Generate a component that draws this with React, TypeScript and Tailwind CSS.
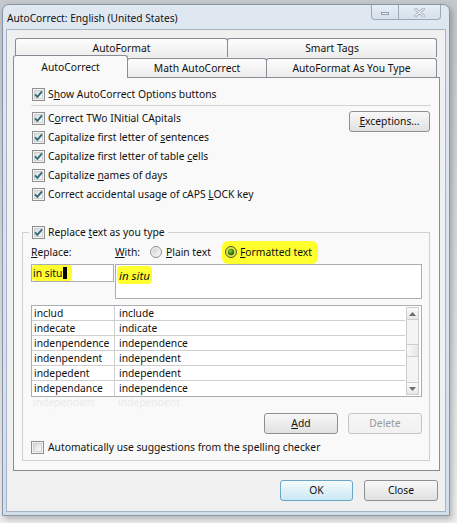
import React from 'react';

function CheckBox({ checked = true }: { checked?: boolean }) {
  return (
    <svg width="13" height="13" viewBox="0 0 13 13" className="shrink-0">
      <defs>
        <linearGradient id="cbfill" x1="0" y1="0" x2="1" y2="1">
          <stop offset="0" stopColor="#d9d9d9" />
          <stop offset="1" stopColor="#fbfbfb" />
        </linearGradient>
      </defs>
      <rect x="0.5" y="0.5" width="12" height="12" fill="#f4f4f4" stroke="#8e8f8f" />
      <rect x="2.5" y="2.5" width="8" height="8" fill="url(#cbfill)" stroke="#cfcfcf" />
      {checked && (
        <path d="M3 6.3 L5.4 8.8 L10 3.4" fill="none" stroke="#2b6c7e" strokeWidth="1.9" />
      )}
    </svg>
  );
}

function Radio({ checked = false }: { checked?: boolean }) {
  return (
    <svg width="12" height="12" viewBox="0 0 12 12" className="shrink-0">
      <defs>
        <linearGradient id="rdfill" x1="0" y1="0" x2="1" y2="1">
          <stop offset="0" stopColor="#cfcfcf" />
          <stop offset="1" stopColor="#f7f7f7" />
        </linearGradient>
        <radialGradient id="rddot" cx="0.4" cy="0.35" r="0.7">
          <stop offset="0" stopColor="#7fd23a" />
          <stop offset="1" stopColor="#1c4d0c" />
        </radialGradient>
      </defs>
      <circle cx="6" cy="6" r="5.5" fill={checked ? '#e6e64a' : '#f2f2f2'} stroke={checked ? '#55581a' : '#8e8f8f'} />
      {checked ? (
        <circle cx="6" cy="6" r="3.2" fill="url(#rddot)" />
      ) : (
        <circle cx="6" cy="6" r="3.8" fill="url(#rdfill)" />
      )}
    </svg>
  );
}

function CheckRow({ children, checked = true }: { children: React.ReactNode; checked?: boolean }) {
  return (
    <div className="flex h-[19px] items-center gap-[3px] pl-[18px]">
      <CheckBox checked={checked} />
      <span className="whitespace-nowrap">{children}</span>
    </div>
  );
}

function Btn({ children, w, kind = 'normal' }: { children: React.ReactNode; w: string; kind?: 'normal' | 'default' | 'disabled' }) {
  const look =
    kind === 'default'
      ? 'border-[#6aa6c6] from-[#f6fbfd] to-[#c9e8f4]'
      : kind === 'disabled'
        ? 'border-[#c4c6c8] from-[#f6f6f6] to-[#f1f1f1] text-[#9a9a9a]'
        : 'border-[#8e8f8f] from-[#f8f8f8] to-[#e1e1e1]';
  return (
    <div className={`flex h-[21px] ${w} items-center justify-center rounded-[3px] border bg-gradient-to-b ${look}`}>
      {children}
    </div>
  );
}

const rows = [
  ['includ', 'include'],
  ['indecate', 'indicate'],
  ['indenpendence', 'independence'],
  ['indenpendent', 'independent'],
  ['indepedent', 'independent'],
  ['independance', 'independence'],
];

export default function App() {
  return (
    <div className="h-[523px] w-[457px] overflow-hidden bg-gradient-to-b from-[#c4c7cb] to-[#eeeeee] font-['Noto_Sans',sans-serif] text-[10.3px] leading-[15px] text-[#111]">
      <div className="ml-[2px] mt-[4px] flex h-[512px] w-[448px] flex-col rounded-t-[7px] border border-[#8797a9] bg-gradient-to-b from-[#dfe8f1] to-[#d2deea] shadow-[2px_3px_6px_rgba(0,0,0,0.25)]">
        {/* title bar */}
        <div className="flex h-[24px] shrink-0 items-start">
          <span className="ml-[4px] mt-[3px] whitespace-nowrap text-[10.2px] leading-[20px]">AutoCorrect: English (United States)</span>
          <div className="ml-auto mr-[8px] flex h-[15px] rounded-b-[4px] border border-t-0 border-[#9aa8b9] bg-gradient-to-b from-[#e6edf4] to-[#d6e1ec]">
            <div className="flex w-[27px] items-center justify-center border-r border-[#9aa8b9]">
              <span className="mt-[3px] h-[3px] w-[8px] border border-[#8f9caa] bg-[#eef2f6]" />
            </div>
            <div className="flex w-[41px] items-center justify-center">
              <svg width="11" height="9" viewBox="0 0 11 9">
                <path d="M1.5 1 L9.5 8 M9.5 1 L1.5 8" stroke="#9aa6b4" strokeWidth="2.6" strokeLinecap="round" />
                <path d="M1.5 1 L9.5 8 M9.5 1 L1.5 8" stroke="#e9eef3" strokeWidth="1.2" strokeLinecap="round" />
              </svg>
            </div>
          </div>
        </div>

        {/* client area */}
        <div className="mx-[3px] mb-[3px] flex flex-1 flex-col border border-[#a7b4c3] bg-[#f0f0f0]">
          <div className="ml-[6px] mt-[8px] w-[427px]">
            {/* back tab row */}
            <div className="flex h-[19px] pl-[2px]">
              <div className="flex w-[213px] items-center justify-center rounded-t-[3px] border border-b-0 border-[#898c95] bg-gradient-to-b from-[#fdfdfd] to-[#ececec] pt-[1px]">
                AutoFormat
              </div>
              <div className="-ml-px flex w-[210px] items-center justify-center rounded-t-[3px] border border-b-0 border-[#898c95] bg-gradient-to-b from-[#fdfdfd] to-[#ececec] pt-[1px]">
                Smart Tags
              </div>
            </div>
            {/* front tab row */}
            <div className="flex h-[20px] items-end">
              <div className="relative z-10 -mb-px flex h-[23px] w-[115px] items-center justify-center rounded-t-[3px] border border-b-0 border-[#898c95] bg-[#f9f9f9]">
                AutoCorrect
              </div>
              <div className="-ml-px flex h-[19px] w-[140px] items-center justify-center rounded-t-[3px] border border-b-0 border-[#898c95] bg-gradient-to-b from-[#fdfdfd] to-[#ececec] pt-[1px]">
                Math AutoCorrect
              </div>
              <div className="-ml-px flex h-[19px] w-[171px] items-center justify-center rounded-t-[3px] border border-b-0 border-[#898c95] bg-gradient-to-b from-[#fdfdfd] to-[#ececec] pt-[1px]">
                AutoFormat As You Type
              </div>
            </div>

            {/* tab panel */}
            <div className="flex h-[394px] flex-col border border-[#898c95] bg-[#f9f9f9] pt-[7px]">
              <CheckRow>
                S<u>h</u>ow AutoCorrect Options buttons
              </CheckRow>
              <div className="ml-[17px] mt-[1px] h-px w-[400px] bg-[#d3d3d3]" />

              <div className="mt-[3px] flex">
                <div className="flex flex-1 flex-col">
                  <CheckRow>
                    C<u>o</u>rrect TWo INitial CApitals
                  </CheckRow>
                  <CheckRow>
                    Capitalize first letter of <u>s</u>entences
                  </CheckRow>
                  <CheckRow>
                    Capitalize first letter of table <u>c</u>ells
                  </CheckRow>
                  <CheckRow>
                    Capitalize <u>n</u>ames of days
                  </CheckRow>
                  <CheckRow>
                    Correct accidental usage of cAPS <u>L</u>OCK key
                  </CheckRow>
                </div>
                <div className="mr-[9px] mt-[2px]">
                  <Btn w="w-[81px]">
                    <span>
                      <u>E</u>xceptions...
                    </span>
                  </Btn>
                </div>
              </div>

              {/* replace group */}
              <div className="ml-[8px] mt-[28px] flex w-[408px] flex-col border border-[#d0d0d0] pb-[3px]">
                <div className="-mt-[10px] ml-[6px] flex h-[19px] w-fit items-center gap-[3px] bg-[#f9f9f9] px-[3px]">
                  <CheckBox />
                  <span className="whitespace-nowrap">
                    Replace <u>t</u>ext as you type
                  </span>
                </div>

                <div className="flex h-[20px] items-center">
                  <span className="ml-[8px] w-[84px]">
                    <u>R</u>eplace:
                  </span>
                  <span className="w-[35px]">
                    <u>W</u>ith:
                  </span>
                  <span className="flex w-[72px] items-center gap-[4px]">
                    <Radio />
                    <span className="whitespace-nowrap">
                      <u>P</u>lain text
                    </span>
                  </span>
                  <span className="flex h-[23px] items-center gap-[3px] rounded-[6px] bg-[#ffff30] pl-[3px] pr-[6px]">
                    <Radio checked />
                    <span className="whitespace-nowrap">
                      <u>F</u>ormatted text
                    </span>
                  </span>
                </div>

                <div className="mt-[2px] flex items-start">
                  <div className="ml-[8px] flex h-[18px] w-[83px] items-center border border-[#abadb3] bg-white">
                    <span className="flex h-[16px] items-center rounded-[3px] bg-[#ffff30] pl-[1px] pr-[5px]">
                      <span>in situ</span>
                      <span className="ml-[1px] h-[12px] w-[4px] bg-black" />
                    </span>
                  </div>
                  <div className="ml-[1px] h-[35px] w-[307px] border border-[#abadb3] bg-white pl-[1px] pt-[1px]">
                    <span className="inline-flex h-[18px] items-center rounded-[4px] bg-[#ffff30] px-[2px] text-[11.5px] italic">
                      in situ
                    </span>
                  </div>
                </div>

                {/* list */}
                <div className="ml-[8px] mt-[6px] flex w-[391px] border border-[#abadb3] bg-white">
                  <div className="flex flex-1 flex-col">
                    {rows.map(([a, b], i) => (
                      <div key={a} className={`flex h-[15px] ${i < rows.length - 1 ? 'border-b border-[#cfcfcf]' : ''}`}>
                        <span className="w-[83px] border-r border-[#cfcfcf] pl-[2px] leading-[14px]">{a}</span>
                        <span className="flex-1 pl-[4px] leading-[14px]">{b}</span>
                      </div>
                    ))}
                  </div>
                  <div className="my-[1px] ml-px mr-[2px] flex w-[13px] flex-col border border-[#cdcdcd] bg-[#f4f4f4]">
                    <div className="flex h-[12px] items-center justify-center border-b border-[#cdcdcd] bg-gradient-to-b from-[#fafafa] to-[#e8e8e8]">
                      <svg width="7" height="4" viewBox="0 0 7 4">
                        <path d="M0 4 L3.5 0 L7 4 Z" fill="#6e6e6e" />
                      </svg>
                    </div>
                    <div className="h-[24px]" />
                    <div className="h-[13px] border-y border-[#cdcdcd] bg-gradient-to-r from-[#f8f8f8] to-[#e6e6e6]" />
                    <div className="flex-1" />
                    <div className="flex h-[12px] items-center justify-center border-t border-[#cdcdcd] bg-gradient-to-b from-[#fafafa] to-[#e8e8e8]">
                      <svg width="7" height="4" viewBox="0 0 7 4">
                        <path d="M0 0 L3.5 4 L7 0 Z" fill="#6e6e6e" />
                      </svg>
                    </div>
                  </div>
                </div>
                <div className="ml-[8px] flex h-[11px] leading-[11px] text-[#ebebeb]">
                  <span className="w-[83px] pl-[2px]">independant</span>
                  <span className="pl-[4px]">independent</span>
                </div>

                <div className="mr-[7px] mt-[5px] flex justify-end gap-[10px]">
                  <Btn w="w-[74px]">
                    <span>
                      <u>A</u>dd
                    </span>
                  </Btn>
                  <Btn w="w-[74px]" kind="disabled">
                    Delete
                  </Btn>
                </div>

                <div className="mt-[4px] flex h-[19px] items-center gap-[4px] pl-[8px]">
                  <CheckBox checked={false} />
                  <span className="whitespace-nowrap">Automatically use suggestions from the spelling checker</span>
                </div>
              </div>
            </div>
          </div>

          {/* footer */}
          <div className="mr-[7px] mt-[9px] flex justify-end gap-[11px]">
            <Btn w="w-[73px]" kind="default">
              OK
            </Btn>
            <Btn w="w-[74px]">Close</Btn>
          </div>
        </div>
      </div>
    </div>
  );
}
